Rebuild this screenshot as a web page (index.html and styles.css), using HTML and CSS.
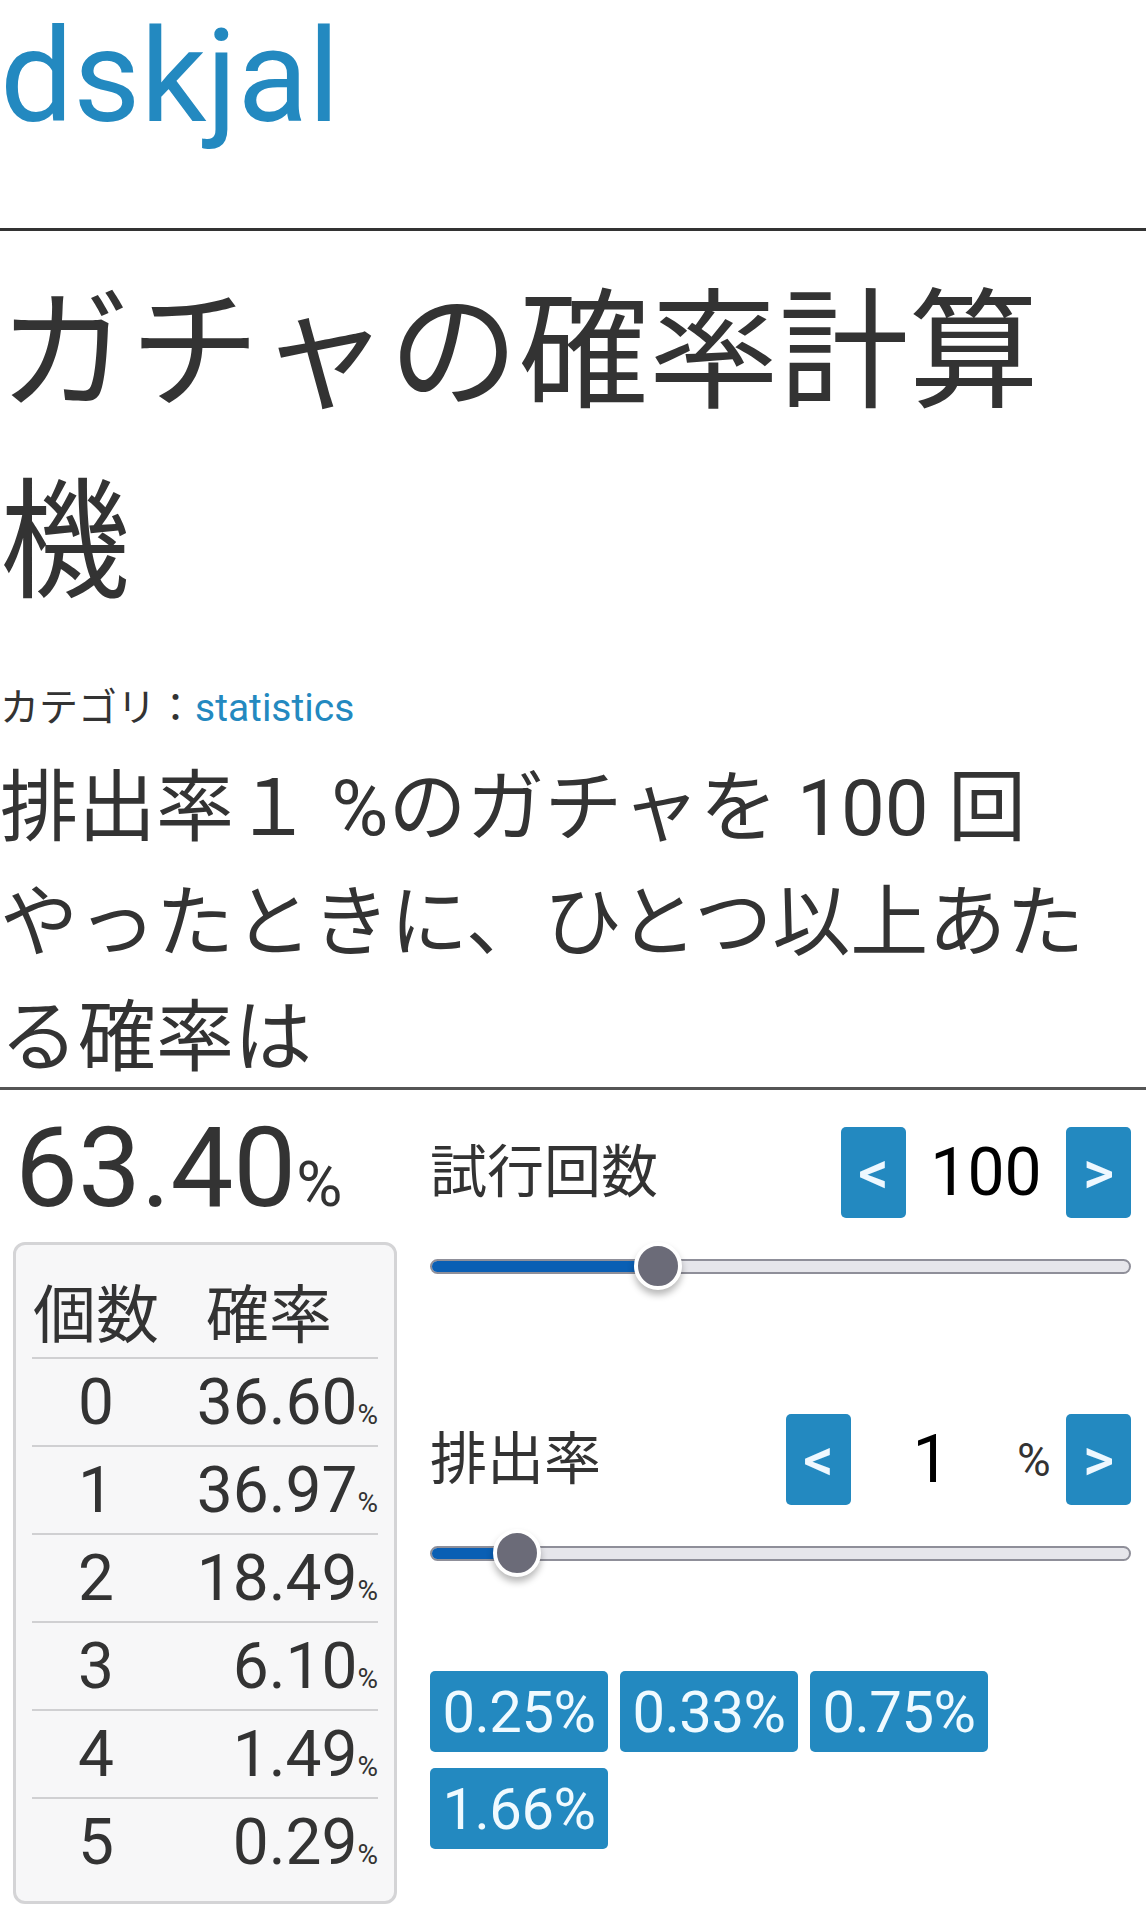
FILE: index.html
```html
<!DOCTYPE html>
<html lang="ja">
<head>
<meta charset="utf-8">
<title>ガチャの確率計算機 | dskjal</title>
<link rel="stylesheet" href="styles.css">
</head>
<body>
<header class="site-header">
  <a class="site-title" href="#">dskjal</a>
</header>
<main class="article">
  <h1 class="title">ガチャの確率計算機</h1>
  <p class="category">カテゴリ：<a href="#">statistics</a></p>
  <p class="question">排出率１ %のガチャを 100 回やったときに、ひとつ以上あたる確率は</p>

  <section class="calc">
    <div class="result-col">
      <div class="result">63.40<span class="result-unit">%</span></div>
      <div class="dist-box">
        <table class="dist">
          <thead>
            <tr><th class="c-count">個数</th><th class="c-prob">確率</th></tr>
          </thead>
          <tbody>
            <tr><td class="c-count">0</td><td class="c-prob">36.60<small>%</small></td></tr>
            <tr><td class="c-count">1</td><td class="c-prob">36.97<small>%</small></td></tr>
            <tr><td class="c-count">2</td><td class="c-prob">18.49<small>%</small></td></tr>
            <tr><td class="c-count">3</td><td class="c-prob">6.10<small>%</small></td></tr>
            <tr><td class="c-count">4</td><td class="c-prob">1.49<small>%</small></td></tr>
            <tr><td class="c-count">5</td><td class="c-prob">0.29<small>%</small></td></tr>
          </tbody>
        </table>
      </div>
    </div>

    <div class="controls">
      <div class="control control-trials">
        <div class="control-head">
          <span class="label">試行回数</span>
          <div class="stepper">
            <button class="step">&lt;</button>
            <span class="step-val">100</span>
            <button class="step">&gt;</button>
          </div>
        </div>
        <div class="slider">
          <div class="track"><div class="fill" style="width:32.5%"></div></div>
          <div class="thumb" style="left:32.5%"></div>
        </div>
      </div>

      <div class="control control-rate">
        <div class="control-head">
          <span class="label">排出率</span>
          <div class="stepper">
            <button class="step">&lt;</button>
            <span class="step-val">1</span>
            <span class="step-unit">%</span>
            <button class="step">&gt;</button>
          </div>
        </div>
        <div class="slider">
          <div class="track"><div class="fill" style="width:12.4%"></div></div>
          <div class="thumb" style="left:12.4%"></div>
        </div>
      </div>

      <div class="presets">
        <button class="preset">0.25%</button>
        <button class="preset">0.33%</button>
        <button class="preset">0.75%</button>
        <button class="preset">1.66%</button>
      </div>
    </div>
  </section>
</main>
</body>
</html>
```

FILE: styles.css
```css
html, body {
  margin: 0;
  padding: 0;
  background: #fff;
}

body {
  font-family: Roboto, "Noto Sans CJK JP", sans-serif;
  color: #333;
}

a {
  color: #2389c0;
  text-decoration: none;
}

.site-header {
  padding: 0 0 74px;
  border-bottom: 3px solid #333;
}

.site-title {
  font-size: 130px;
  line-height: 154px;
  display: block;
}

.article {
  padding: 0;
}

.title {
  margin: 27px 0 0;
  font-size: 130px;
  line-height: 190px;
  font-weight: 400;
  color: #333;
}

.category {
  margin: 42px 0 0;
  font-size: 39px;
  line-height: 57px;
}

.question {
  margin: 14px 0 0;
  padding-right: 48px;
  font-size: 78px;
  line-height: 115px;
}

.calc {
  margin-top: -9px;
  border-top: 3px solid #555;
  display: grid;
  grid-template-columns: 397px 1fr;
  column-gap: 33px;
  padding-right: 15px;
}

.result-col {
  padding-left: 13px;
}

.result {
  margin-top: 12px;
  font-size: 112px;
  line-height: normal;
  padding-left: 2px;
}

.result-unit {
  font-size: 63px;
}

.dist-box {
  margin-top: 9px;
  border: 3px solid #d4d4d6;
  border-radius: 12px;
  background: #f7f7f8;
  padding: 16px;
}

.dist {
  width: 100%;
  border-collapse: collapse;
}

.dist th {
  height: 96px;
  font-size: 63px;
  font-weight: 400;
  text-align: center;
  padding: 0;
  border-bottom: 2px solid #d0d0d2;
}

.dist td {
  height: 86px;
  font-size: 64px;
  padding: 0;
  border-bottom: 2px solid #d0d0d2;
}

.dist tbody tr:last-child td {
  border-bottom: 0;
}

.dist .c-count {
  width: 128px;
  text-align: center;
}

.dist td.c-prob {
  text-align: right;
}

.dist small {
  font-size: 28px;
}

.controls {
  padding-top: 37px;
}

.control-trials {
  margin-bottom: 125px;
}

.control-rate {
  margin-bottom: 95px;
}

.control-head {
  display: flex;
  justify-content: space-between;
  align-items: center;
  height: 91px;
}

.label {
  font-size: 57px;
  line-height: 1;
}

.stepper {
  display: flex;
  align-items: center;
}

.step {
  width: 65px;
  height: 91px;
  border: 0;
  border-radius: 5px;
  background: #2389c0;
  color: #eef8ff;
  font-family: Roboto, sans-serif;
  font-size: 60px;
  font-weight: 500;
  padding: 0;
}

.step-val {
  width: 160px;
  text-align: center;
  font-size: 66px;
  color: #000;
}

.step-unit {
  width: 55px;
  font-size: 46px;
  padding-left: 6px;
  box-sizing: border-box;
  color: #333;
}

.slider {
  position: relative;
  margin-top: 25px;
  height: 46px;
  display: flex;
  align-items: center;
}

.track {
  flex: 1;
  height: 15px;
  box-sizing: border-box;
  border: 2px solid #8f8f99;
  border-radius: 8px;
  background: #e6e6eb;
  overflow: hidden;
}

.fill {
  height: 100%;
  background: #0a5fb4;
}

.thumb {
  position: absolute;
  top: 50%;
  width: 48px;
  height: 48px;
  margin: -24px 0 0 -24px;
  box-sizing: border-box;
  border-radius: 50%;
  border: 4px solid #fff;
  background: #6b6b78;
  box-shadow: 0 5px 7px rgba(0, 0, 0, 0.28);
}

.presets {
  display: flex;
  flex-wrap: wrap;
  column-gap: 12px;
  row-gap: 16px;
}

.preset {
  width: 178px;
  height: 81px;
  border: 0;
  border-radius: 5px;
  background: #2389c0;
  color: #f0faff;
  font-family: Roboto, sans-serif;
  font-size: 58px;
  padding: 0;
  letter-spacing: -0.5px;
}
```
